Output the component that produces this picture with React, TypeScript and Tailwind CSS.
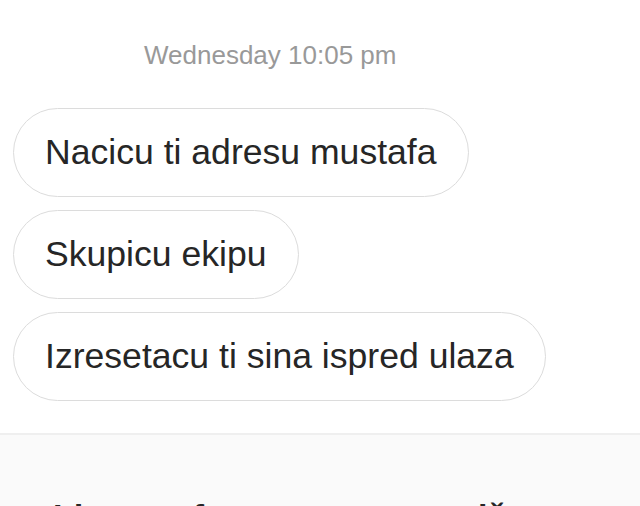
import React from "react";

const messages = [
  "Nacicu ti adresu mustafa",
  "Skupicu ekipu",
  "Izresetacu ti sina ispred ulaza",
];

export default function App() {
  return (
    <div className="w-[640px] h-[506px] bg-white overflow-hidden flex flex-col font-['Liberation_Sans',Arial,sans-serif]">
      <div className="pt-[40px] pl-[144px] text-[26px] leading-[30px] text-[#999999]">
        Wednesday 10:05 pm
      </div>
      <div className="mt-[38px] pl-[13px] flex flex-col items-start gap-[13px]">
        {messages.map((m) => (
          <div
            key={m}
            className="h-[89px] rounded-full border-[1.5px] border-[#dcdcdc] px-[31px] flex items-center text-[35.6px] leading-none text-[#262626] whitespace-nowrap"
          >
            {m}
          </div>
        ))}
      </div>
      <div className="mt-[32px] flex-1 border-t-2 border-[#efefef] bg-[#fafafa] pt-[64px] pl-[53px] overflow-hidden">
        <div className="text-[34px] leading-[34px] font-bold text-[#262626] whitespace-nowrap">
          Idemo u fazonu, nema te više
        </div>
      </div>
    </div>
  );
}
